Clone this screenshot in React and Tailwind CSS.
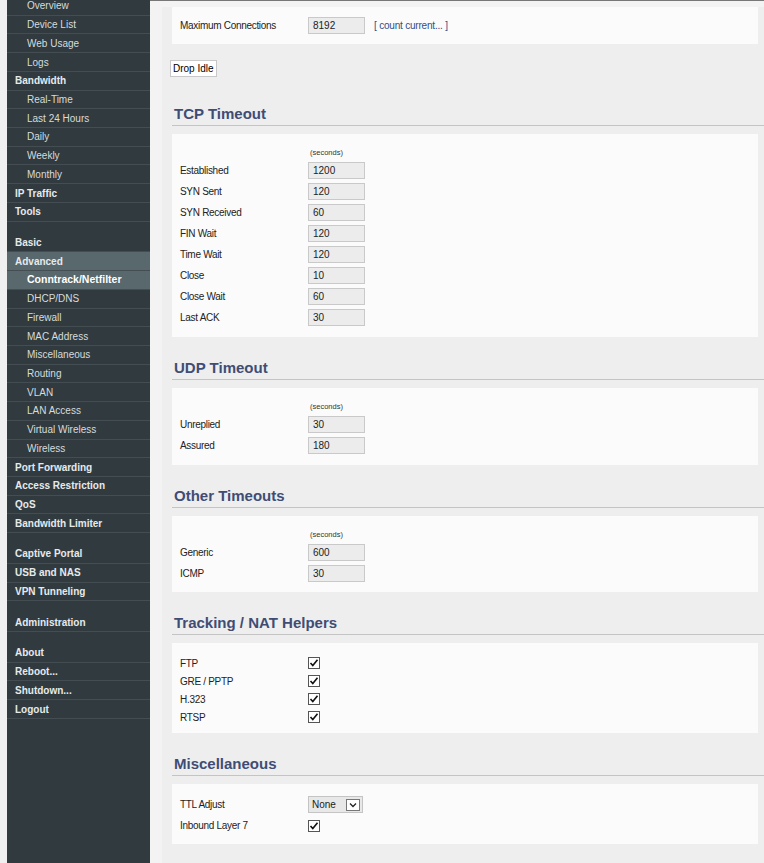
import { useState } from "react";

const font = { fontFamily: '"Liberation Sans", Arial, sans-serif' };

const menu = [
  { label: "Overview", sub: true },
  { label: "Device List", sub: true },
  { label: "Web Usage", sub: true },
  { label: "Logs", sub: true },
  { label: "Bandwidth" },
  { label: "Real-Time", sub: true },
  { label: "Last 24 Hours", sub: true },
  { label: "Daily", sub: true },
  { label: "Weekly", sub: true },
  { label: "Monthly", sub: true },
  { label: "IP Traffic" },
  { label: "Tools" },
  { gap: true },
  { label: "Basic" },
  { label: "Advanced", active: true },
  { label: "Conntrack/Netfilter", sub: true, current: true },
  { label: "DHCP/DNS", sub: true },
  { label: "Firewall", sub: true },
  { label: "MAC Address", sub: true },
  { label: "Miscellaneous", sub: true },
  { label: "Routing", sub: true },
  { label: "VLAN", sub: true },
  { label: "LAN Access", sub: true },
  { label: "Virtual Wireless", sub: true },
  { label: "Wireless", sub: true },
  { label: "Port Forwarding" },
  { label: "Access Restriction" },
  { label: "QoS" },
  { label: "Bandwidth Limiter" },
  { gap: true },
  { label: "Captive Portal" },
  { label: "USB and NAS" },
  { label: "VPN Tunneling" },
  { gap: true },
  { label: "Administration" },
  { gap: true },
  { label: "About" },
  { label: "Reboot..." },
  { label: "Shutdown..." },
  { label: "Logout" },
];

function Sidebar() {
  return (
    <div className="w-[143px] shrink-0 bg-[#313b3f]">
      <div className="-mt-[3px]">
        {menu.map((m, i) =>
          m.gap ? (
            <div key={i} className="h-[12px]" />
          ) : (
            <div
              key={i}
              className={`h-[18.73px] flex items-center border-b border-[#444e52] ${
                m.active || m.current ? "bg-[#58686d]" : ""
              } ${m.sub ? "pl-[20px]" : "pl-[8px]"}`}
            >
              <span
                className={
                  m.current
                    ? "text-[10.5px] font-bold text-white"
                    : m.sub
                    ? "text-[10px] text-[#d6dbde]"
                    : "text-[10px] font-bold text-[#e6eaec]"
                }
              >
                {m.label}
              </span>
            </div>
          )
        )}
      </div>
    </div>
  );
}

function Field({ value }) {
  return (
    <div className="w-[57px] h-[17px] bg-[#ececec] border border-[#c9c9c9] flex items-center pl-[4px] text-[10px] text-[#222]">
      {value}
    </div>
  );
}

function Check() {
  return (
    <svg width="12" height="12" viewBox="0 0 12 12">
      <rect x="0.5" y="0.5" width="11" height="11" fill="#fff" stroke="#555" />
      <path d="M2.5 6 L4.8 8.6 L9.5 2.8" fill="none" stroke="#111" strokeWidth="1.6" />
    </svg>
  );
}

function Label({ children }) {
  return <div className="w-[128px] text-[10px] tracking-[-0.3px] text-[#222]">{children}</div>;
}

function Row({ label, children }) {
  return (
    <div className="h-[21px] flex items-center">
      <Label>{label}</Label>
      {children}
    </div>
  );
}

function Heading({ title, first }) {
  return (
    <div className={`${first ? "mt-[28px]" : "mt-[22px]"} border-b border-[#c4c4c4] pb-[2px] pl-[2px]`}>
      <div className="h-[18px] leading-[18px] text-[15px] font-bold text-[#3f4d75]">{title}</div>
    </div>
  );
}

function Box({ children, className = "" }) {
  return <div className={`mr-[6px] mt-[8px] bg-[#fbfbfb] pl-[8px] ${className}`}>{children}</div>;
}

function Seconds() {
  return (
    <div className="h-[14px] flex items-center pl-[130px] text-[7.5px] text-[#333]">(seconds)</div>
  );
}

export default function App() {
  const [ttl] = useState("None");
  const tcp = [
    ["Established", "1200"],
    ["SYN Sent", "120"],
    ["SYN Received", "60"],
    ["FIN Wait", "120"],
    ["Time Wait", "120"],
    ["Close", "10"],
    ["Close Wait", "60"],
    ["Last ACK", "30"],
  ];

  return (
    <div className="h-[863px] overflow-hidden flex bg-[#f0f0f0] pl-[7px]" style={font}>
      <Sidebar />
      <div className="flex-1 bg-[#f3f3f3]">
        <div className="h-[1px] bg-[#777]" />
        <div className="ml-[12px] bg-[#eeeeee] pl-[10px] h-[862px]">
          <div className="mr-[6px] mt-[6px] bg-[#fbfbfb] pl-[8px] pt-[8px] pb-[8px]">
            <Row label="Maximum Connections">
              <Field value="8192" />
              <span className="ml-[9px] text-[10px] tracking-[-0.2px] text-[#2f4f8c]">[ count current... ]</span>
            </Row>
          </div>

          <div className="mt-[16px] -ml-[2px] flex">
            <button className="h-[17px] px-[2px] bg-white border border-[#c8c8c8] text-[10px] text-black leading-none">
              Drop Idle
            </button>
          </div>

          <Heading title="TCP Timeout" first />
          <Box className="pt-[12px] pb-[9px]">
            <Seconds />
            {tcp.map(([l, v]) => (
              <Row key={l} label={l}>
                <Field value={v} />
              </Row>
            ))}
          </Box>

          <Heading title="UDP Timeout" />
          <Box className="pt-[12px] pb-[9px]">
            <Seconds />
            <Row label="Unreplied">
              <Field value="30" />
            </Row>
            <Row label="Assured">
              <Field value="180" />
            </Row>
          </Box>

          <Heading title="Other Timeouts" />
          <Box className="pt-[12px] pb-[8px]">
            <Seconds />
            <Row label="Generic">
              <Field value="600" />
            </Row>
            <Row label="ICMP">
              <Field value="30" />
            </Row>
          </Box>

          <Heading title="Tracking / NAT Helpers" />
          <Box className="pt-[11px] pb-[7px]">
            {["FTP", "GRE / PPTP", "H.323", "RTSP"].map((l) => (
              <div key={l} className="h-[18px] flex items-center">
                <Label>{l}</Label>
                <Check />
              </div>
            ))}
          </Box>

          <Heading title="Miscellaneous" />
          <Box className="pt-[10px] pb-[8px]">
            <Row label="TTL Adjust">
              <div className="w-[55px] h-[17px] bg-[#e8e8e8] border border-[#c4c4c4] flex items-center justify-between pl-[3px] pr-[2px] text-[10px] text-[#222]">
                <span>{ttl}</span>
                <span className="w-[14px] h-[12px] bg-white border border-[#777] flex items-center justify-center">
                  <svg width="8" height="6" viewBox="0 0 8 6">
                    <path d="M1 1.5 L4 4.5 L7 1.5" fill="none" stroke="#222" strokeWidth="1.3" />
                  </svg>
                </span>
              </div>
            </Row>
            <Row label="Inbound Layer 7">
              <Check />
            </Row>
          </Box>
        </div>
      </div>
    </div>
  );
}
